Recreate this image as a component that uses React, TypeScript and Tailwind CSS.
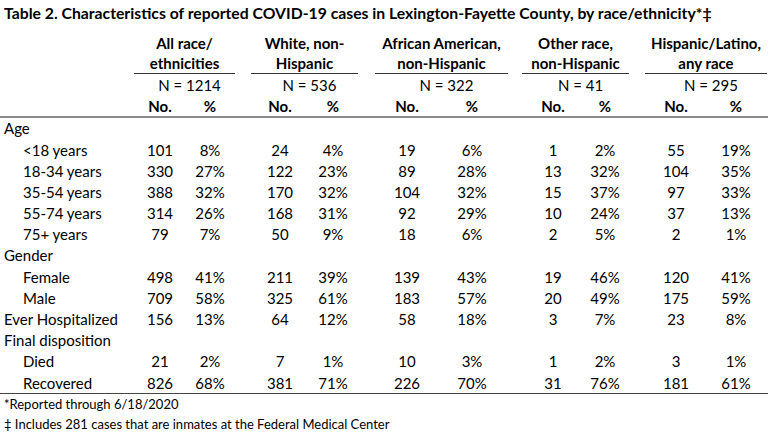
const groups = [
  { top: "All race/", bottom: "ethnicities", n: "N = 1214", cls: "w-[101px]" },
  { top: "White, non-", bottom: "Hispanic", n: "N = 536", cls: "ml-[16px] w-[107px]" },
  { top: "African American,", bottom: "non-Hispanic", n: "N = 322", cls: "ml-[17px] w-[133px]" },
  { top: "Other race,", bottom: "non-Hispanic", n: "N = 41", cls: "ml-[14px] w-[107px]" },
  { top: "Hispanic/Latino,", bottom: "any race", n: "N = 295", cls: "ml-[16px] w-[122px]" },
];

// centers of the ten value columns: 160 210 280 333 407 472 553 605 676 736
const colCls = [
  "w-[36px]",
  "ml-[14px] w-[36px]",
  "ml-[34px] w-[36px]",
  "ml-[17px] w-[36px]",
  "ml-[38px] w-[36px]",
  "ml-[29px] w-[36px]",
  "ml-[45px] w-[36px]",
  "ml-[16px] w-[36px]",
  "ml-[35px] w-[36px]",
  "ml-[24px] w-[36px]",
];

type Row = { label: string; indent?: boolean; values?: string[] };

const rows: Row[] = [
  { label: "Age" },
  { label: "<18 years", indent: true, values: ["101", "8%", "24", "4%", "19", "6%", "1", "2%", "55", "19%"] },
  { label: "18-34 years", indent: true, values: ["330", "27%", "122", "23%", "89", "28%", "13", "32%", "104", "35%"] },
  { label: "35-54 years", indent: true, values: ["388", "32%", "170", "32%", "104", "32%", "15", "37%", "97", "33%"] },
  { label: "55-74 years", indent: true, values: ["314", "26%", "168", "31%", "92", "29%", "10", "24%", "37", "13%"] },
  { label: "75+ years", indent: true, values: ["79", "7%", "50", "9%", "18", "6%", "2", "5%", "2", "1%"] },
  { label: "Gender" },
  { label: "Female", indent: true, values: ["498", "41%", "211", "39%", "139", "43%", "19", "46%", "120", "41%"] },
  { label: "Male", indent: true, values: ["709", "58%", "325", "61%", "183", "57%", "20", "49%", "175", "59%"] },
  { label: "Ever Hospitalized", values: ["156", "13%", "64", "12%", "58", "18%", "3", "7%", "23", "8%"] },
  { label: "Final disposition" },
  { label: "Died", indent: true, values: ["21", "2%", "7", "1%", "10", "3%", "1", "2%", "3", "1%"] },
  { label: "Recovered", indent: true, values: ["826", "68%", "381", "71%", "226", "70%", "31", "76%", "181", "61%"] },
];

export default function App() {
  return (
    <div className="w-[768px] h-[435px] bg-white text-black overflow-hidden font-['Lato','Liberation_Sans',sans-serif] text-[15px]">
      <h1 className="pl-[4px] pt-[3px] h-[33px] font-bold text-[15.75px] leading-[20px] whitespace-nowrap">
        Table 2. Characteristics of reported COVID-19 cases in Lexington-Fayette County, by race/ethnicity*‡
      </h1>

      {/* column group headers */}
      <div className="flex">
        <div className="w-[134px] shrink-0" />
        {groups.map((g) => (
          <div key={g.top} className={`${g.cls} shrink-0 flex flex-col items-stretch`}>
            <div className="font-bold text-center leading-[20px] border-b border-[#333]">
              <div>{g.top}</div>
              <div>{g.bottom}</div>
            </div>
            <div className="text-center leading-[22px] pl-[10px]">{g.n}</div>
          </div>
        ))}
      </div>

      <div className="flex h-[22px] items-center font-bold border-b-2 border-[#8a8a8a]">
        <div className="w-[142px] shrink-0" />
        {colCls.map((c, i) => (
          <div key={i} className={`${c} shrink-0 text-center`}>
            {i % 2 === 0 ? "No." : "%"}
          </div>
        ))}
      </div>

      <div className="border-b border-[#444]">
        {rows.map((r) => (
          <div key={r.label} className="flex h-[21.2px] items-center whitespace-nowrap">
            <div className={`w-[142px] shrink-0 ${r.indent ? "pl-[23px]" : "pl-[4px]"}`}>{r.label}</div>
            {r.values &&
              r.values.map((v, i) => (
                <div key={i} className={`${colCls[i]} shrink-0 text-center`}>
                  {v}
                </div>
              ))}
          </div>
        ))}
      </div>

      <div className="pl-[4px] text-[13px] leading-[20px]">
        <div>*Reported through 6/18/2020</div>
        <div>‡ Includes 281 cases that are inmates at the Federal Medical Center</div>
      </div>
    </div>
  );
}
